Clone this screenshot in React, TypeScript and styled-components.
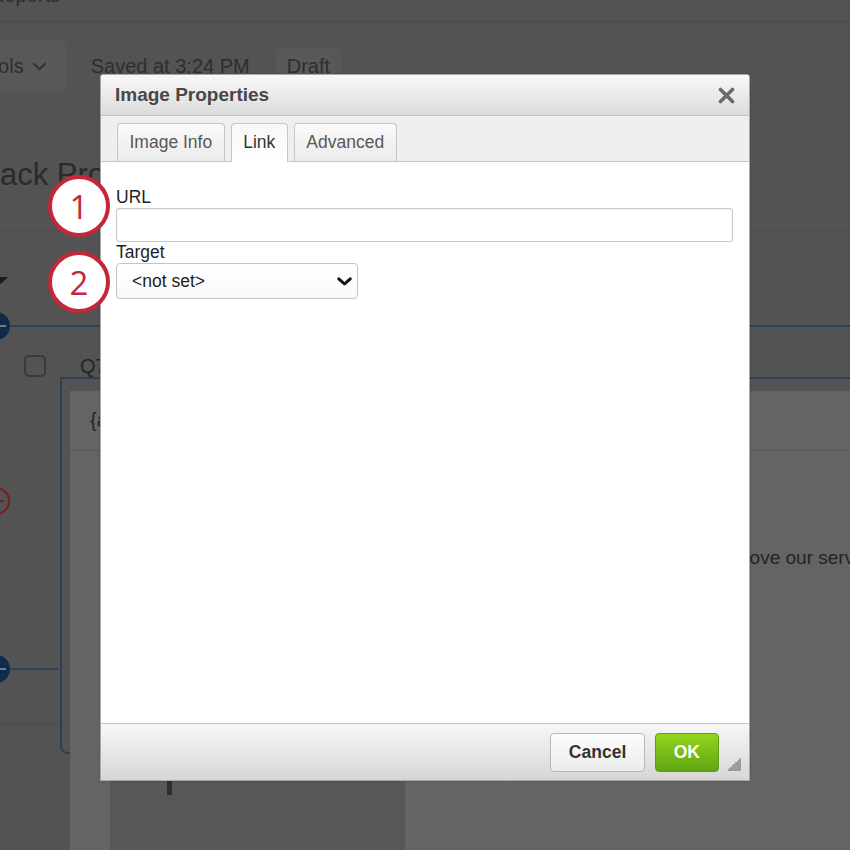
import React from "react";
import styled, { createGlobalStyle } from "styled-components";

const GlobalStyle = createGlobalStyle`
  html, body { margin: 0; padding: 0; }
  body {
    font-family: "Liberation Sans", Arial, Helvetica, sans-serif;
    background: #535353;
  }
  * { box-sizing: border-box; }
`;

const Page = styled.div`
  position: relative;
  width: 850px;
  height: 850px;
  overflow: hidden;
  background: #535353;
`;

/* ---------- dimmed page underneath ---------- */

const Backdrop = styled.div`
  display: flex;
  flex-direction: column;
  width: 100%;
  height: 100%;
  color: #2c2c2c;
`;

const TopStrip = styled.div`
  flex: none;
  height: 22px;
  display: flex;
  align-items: flex-start;
  border-bottom: 1px solid #4a4a4a;
`;

const TopCrumb = styled.span`
  margin-top: -15px;
  margin-left: -10px;
  font-size: 20px;
  line-height: 20px;
  color: #2e2e2e;
`;

const Toolbar = styled.div`
  flex: none;
  height: 88px;
  display: flex;
  align-items: center;
  font-size: 20px;
  color: #2e2e2e;
`;

const ToolsButton = styled.div`
  display: flex;
  align-items: center;
  gap: 8px;
  height: 52px;
  margin-left: -40px;
  padding: 0 20px 0 17px;
  background: #585858;
  border-radius: 8px;
`;

const SavedText = styled.span`
  margin-left: 24px;
`;

const DraftBadge = styled.span`
  margin-left: 26px;
  height: 37px;
  padding: 0 11px;
  display: flex;
  align-items: center;
  background: #585858;
  border-radius: 6px;
`;

const TitleRow = styled.div`
  flex: none;
  height: 121px;
  padding-top: 47px;
  border-bottom: 1px solid #4b4b4b;
`;

const PageTitle = styled.h1`
  margin: 0 0 0 -88px;
  font-size: 31px;
  line-height: 36px;
  font-weight: 400;
  white-space: nowrap;
  color: #2a2a2a;
`;

const Workspace = styled.div`
  flex: 1;
  display: flex;
  flex-direction: column;
  min-height: 0;
`;

const CaretRow = styled.div`
  flex: none;
  height: 81px;
  padding-top: 46px;
`;

const Caret = styled.div`
  width: 0;
  height: 0;
  margin-left: -6px;
  border-left: 7px solid transparent;
  border-right: 7px solid transparent;
  border-top: 7px solid #1c1c1c;
`;

const ConnectorRow = styled.div<{ $width?: number }>`
  flex: none;
  display: flex;
  align-items: center;
  height: 28px;
  width: ${(p) => (p.$width ? `${p.$width}px` : "auto")};
`;

const NodeDot = styled.div<{ $tone: "navy" | "red" }>`
  flex: none;
  width: 28px;
  height: 28px;
  margin-left: -18px;
  border-radius: 50%;
  display: flex;
  align-items: center;
  justify-content: flex-end;
  padding-right: 4px;
  background: ${(p) => (p.$tone === "navy" ? "#0f2b4c" : "transparent")};
  border: ${(p) => (p.$tone === "navy" ? "none" : "2px solid #7c1a1f")};
  &::after {
    content: "";
    width: 8px;
    height: 2px;
    background: ${(p) => (p.$tone === "navy" ? "#6f7c8b" : "#7c1a1f")};
  }
`;

const ConnectorLine = styled.div`
  flex: 1;
  height: 2px;
  background: #2e4157;
`;

const QuestionHead = styled.div`
  flex: none;
  height: 37px;
  display: flex;
  align-items: flex-end;
  gap: 34px;
  padding-left: 24px;
`;

const Checkbox = styled.div`
  width: 22px;
  height: 22px;
  border: 2px solid #3a3a3a;
  border-radius: 5px;
`;

const QLabel = styled.span`
  font-size: 20px;
  line-height: 22px;
  color: #232323;
`;

const QuestionBody = styled.div`
  flex: 1;
  display: grid;
  grid-template-columns: 60px 1fr;
  align-items: start;
`;

const Gutter = styled.div`
  display: flex;
  flex-direction: column;
  padding-top: 110px;
`;

const GutterGap = styled.div<{ $h: number }>`
  height: ${(p) => p.$h}px;
  flex: none;
`;

const GutterRule = styled.div`
  height: 1px;
  width: 58px;
  background: #4a4a4a;
`;

const QuestionCard = styled.div`
  height: 377px;
  border: 2px solid #2d4056;
  border-right: none;
  border-radius: 0 0 0 8px;
  padding: 12px 0 0 8px;
`;

const EditorPanel = styled.div`
  height: 470px;
  background: #646464;
  display: flex;
  flex-direction: column;
`;

const EditorHeader = styled.div`
  flex: none;
  height: 60px;
  display: flex;
  align-items: center;
  padding-left: 20px;
  border-bottom: 1px solid #585858;
  font-size: 20px;
  color: #252525;
  white-space: nowrap;
`;

const EditorBody = styled.div`
  flex: 1;
  display: flex;
  gap: 26px;
  padding: 30px 0 0 40px;
`;

const ImageSlot = styled.div`
  flex: none;
  width: 295px;
  height: 420px;
  background: #575757;
  padding: 294px 0 0 57px;
`;

const CursorBar = styled.div`
  width: 5px;
  height: 20px;
  background: #2f2f2f;
`;

const BodyText = styled.p`
  margin: 65px 0 0;
  font-size: 19px;
  line-height: 24px;
  white-space: nowrap;
  color: #232323;
`;

/* ---------- dialog ---------- */

const Dialog = styled.section`
  position: absolute;
  left: 100px;
  top: 74px;
  width: 650px;
  height: 707px;
  display: flex;
  flex-direction: column;
  background: #fff;
  border: 1px solid #a9a9a9;
  border-radius: 3px 3px 0 0;
  box-shadow: 0 0 2px rgba(0, 0, 0, 0.25);
`;

const TitleBar = styled.header`
  flex: none;
  height: 41px;
  display: flex;
  align-items: center;
  justify-content: space-between;
  padding: 0 14px;
  background: linear-gradient(#f8f8f8, #dcdcdc);
  border-bottom: 1px solid #c2c2c2;
  border-radius: 3px 3px 0 0;
`;

const DialogTitle = styled.h2`
  margin: 0;
  font-size: 19px;
  font-weight: 700;
  color: #474747;
`;

const CloseButton = styled.button`
  border: none;
  background: none;
  padding: 0;
  width: 17px;
  height: 17px;
  display: flex;
  cursor: pointer;
`;

const TabStrip = styled.nav`
  flex: none;
  height: 46px;
  display: flex;
  align-items: flex-end;
  gap: 6px;
  padding: 0 16px;
  background: #efefef;
  border-bottom: 1px solid #c6c6c6;
`;

const Tab = styled.div<{ $active?: boolean }>`
  height: ${(p) => (p.$active ? 39 : 38)}px;
  margin-bottom: ${(p) => (p.$active ? -1 : 0)}px;
  padding: 0 11.5px;
  border: 1px solid #c6c6c6;
  border-bottom: none;
  border-radius: 4px 4px 0 0;
  font-size: 17.5px;
  line-height: 37px;
  color: ${(p) => (p.$active ? "#333" : "#585858")};
  background: ${(p) =>
    p.$active ? "linear-gradient(#f7f7f7, #fff)" : "linear-gradient(#fafafa, #ebebeb)"};
`;

const DialogBody = styled.div`
  flex: 1;
  display: flex;
  flex-direction: column;
  padding: 25px 16px 0 15px;
  background: #fff;
`;

const FieldLabel = styled.label`
  display: block;
  height: 20px;
  font-size: 17.5px;
  line-height: 20px;
  color: #1f1f1f;
`;

const TextInput = styled.input`
  margin-top: 1px;
  height: 34px;
  width: 100%;
  border: 1px solid #c8c8c8;
  border-radius: 3px;
  box-shadow: inset 0 1px 2px rgba(0, 0, 0, 0.07);
  outline: none;
  font-size: 16px;
  padding: 0 8px;
`;

const SelectBox = styled.div`
  margin-top: 1px;
  width: 242px;
  height: 36px;
  display: flex;
  align-items: center;
  justify-content: space-between;
  padding: 0 5px 0 15px;
  border: 1px solid #c3c3c3;
  border-radius: 4px;
  background: linear-gradient(#fff, #f9f9f9);
  font-size: 17.5px;
  color: #1e1e1e;
`;

const Footer = styled.footer`
  flex: none;
  height: 57px;
  display: flex;
  justify-content: flex-end;
  align-items: flex-start;
  gap: 10px;
  padding: 9px 8px 0 0;
  border-top: 1px solid #c3c3c3;
  background: linear-gradient(#f7f7f7, #d6d6d6);
`;

const ActionButton = styled.button<{ $primary?: boolean }>`
  height: 39px;
  padding: 0 ${(p) => (p.$primary ? 18 : 17.5)}px;
  border-radius: 4px;
  font-family: "Liberation Sans", Arial, Helvetica, sans-serif;
  font-size: 17.5px;
  font-weight: 700;
  cursor: pointer;
  color: ${(p) => (p.$primary ? "#fff" : "#333")};
  border: 1px solid ${(p) => (p.$primary ? "#5b9b15" : "#b8b8b8")};
  background: ${(p) =>
    p.$primary ? "linear-gradient(#93d51f, #5fa512)" : "linear-gradient(#fcfcfc, #ececec)"};
`;

const ResizeGrip = styled.div`
  align-self: flex-end;
  margin: 0 0 9px -2px;
  width: 14px;
  height: 14px;
  background: linear-gradient(135deg, transparent 50%, #9b9b9b 50%);
`;

/* ---------- annotation badges ---------- */

const StepBadge = styled.div<{ $top: number }>`
  position: absolute;
  left: 48px;
  top: ${(p) => p.$top}px;
  width: 62px;
  height: 62px;
  border-radius: 50%;
  border: 4.5px solid #c4263a;
  background: #fff;
  display: flex;
  align-items: center;
  justify-content: center;
  font-family: "Open Sans", "Liberation Sans", sans-serif;
  font-size: 33px;
  line-height: 1;
  color: #c4263a;
`;

const Chevron = ({ stroke, width }: { stroke: string; width: number }) => (
  <svg width="15" height="9" viewBox="0 0 15 9" fill="none">
    <polyline
      points="1.8,1.8 7.5,7 13.2,1.8"
      stroke={stroke}
      strokeWidth={width}
      strokeLinecap="round"
      strokeLinejoin="round"
    />
  </svg>
);

export default function App() {
  return (
    <>
      <GlobalStyle />
      <Page>
        <Backdrop>
          <TopStrip>
            <TopCrumb>Reports</TopCrumb>
          </TopStrip>
          <Toolbar>
            <ToolsButton>
              <span>Tools</span>
              <Chevron stroke="#2e2e2e" width={1.8} />
            </ToolsButton>
            <SavedText>Saved at 3:24 PM</SavedText>
            <DraftBadge>Draft</DraftBadge>
          </Toolbar>
          <TitleRow>
            <PageTitle>Feedback Process</PageTitle>
          </TitleRow>
          <Workspace>
            <CaretRow>
              <Caret />
            </CaretRow>
            <ConnectorRow>
              <NodeDot $tone="navy" />
              <ConnectorLine />
            </ConnectorRow>
            <QuestionHead>
              <Checkbox />
              <QLabel>Q7</QLabel>
            </QuestionHead>
            <QuestionBody>
              <Gutter>
                <NodeDot $tone="red" />
                <GutterGap $h={140} />
                <ConnectorRow $width={58}>
                  <NodeDot $tone="navy" />
                  <ConnectorLine />
                </ConnectorRow>
                <GutterGap $h={41} />
                <GutterRule />
              </Gutter>
              <QuestionCard>
                <EditorPanel>
                  <EditorHeader>{"{a}"}</EditorHeader>
                  <EditorBody>
                    <ImageSlot>
                      <CursorBar />
                    </ImageSlot>
                    <BodyText>We use your feedback to help us improve our services.</BodyText>
                  </EditorBody>
                </EditorPanel>
              </QuestionCard>
            </QuestionBody>
          </Workspace>
        </Backdrop>

        <Dialog>
          <TitleBar>
            <DialogTitle>Image Properties</DialogTitle>
            <CloseButton aria-label="Close">
              <svg width="17" height="17" viewBox="0 0 17 17">
                <path
                  d="M2.5 2.5 L14.5 14.5 M14.5 2.5 L2.5 14.5"
                  stroke="#6a6a6a"
                  strokeWidth="3.6"
                  strokeLinecap="round"
                />
              </svg>
            </CloseButton>
          </TitleBar>
          <TabStrip>
            <Tab>Image Info</Tab>
            <Tab $active>Link</Tab>
            <Tab>Advanced</Tab>
          </TabStrip>
          <DialogBody>
            <FieldLabel>URL</FieldLabel>
            <TextInput type="text" />
            <FieldLabel>Target</FieldLabel>
            <SelectBox>
              <span>&lt;not set&gt;</span>
              <Chevron stroke="#111" width={3} />
            </SelectBox>
          </DialogBody>
          <Footer>
            <ActionButton>Cancel</ActionButton>
            <ActionButton $primary>OK</ActionButton>
            <ResizeGrip />
          </Footer>
        </Dialog>

        <StepBadge $top={175}>1</StepBadge>
        <StepBadge $top={251}>2</StepBadge>
      </Page>
    </>
  );
}
